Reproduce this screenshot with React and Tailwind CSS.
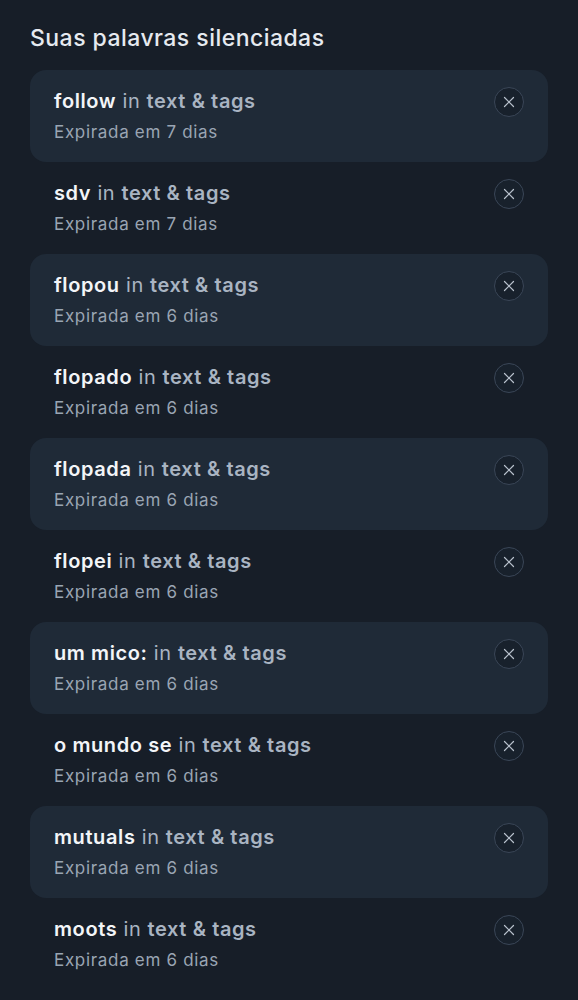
import { X } from 'lucide-react';

const words = [
  { word: 'follow', days: 7 },
  { word: 'sdv', days: 7 },
  { word: 'flopou', days: 6 },
  { word: 'flopado', days: 6 },
  { word: 'flopada', days: 6 },
  { word: 'flopei', days: 6 },
  { word: 'um mico:', days: 6 },
  { word: 'o mundo se', days: 6 },
  { word: 'mutuals', days: 6 },
  { word: 'moots', days: 6 },
];

export default function App() {
  return (
    <div className="min-h-screen bg-[#171e28] px-[30px] pt-[23px] pb-8" style={{ fontFamily: 'Inter, "Noto Sans", sans-serif' }}>
      <h1 className="text-[23px] font-medium tracking-[0.02em] text-[#e6eaf0] leading-[30px] mb-[17px]">Suas palavras silenciadas</h1>
      <div className="flex flex-col">
        {words.map((w, i) => (
          <div
            key={w.word}
            className={`h-[92px] rounded-2xl pl-6 pr-6 flex items-start justify-between ${i % 2 === 0 ? 'bg-[#1f2a37]' : ''}`}
          >
            <div className="pt-[17px]">
              <div className="text-[20px] leading-[28px] tracking-[0.03em] text-[#a9b4c2]">
                <span className="font-semibold text-[#f3f5f8]">{w.word}</span>{' '}
                <span>in</span>{' '}
                <span className="font-semibold">text &amp; tags</span>
              </div>
              <div className="text-[17px] leading-[24px] tracking-[0.04em] text-[#9aa5b3] mt-[5px]">Expirada em {w.days} dias</div>
            </div>
            <button className="mt-[17px] w-[30px] h-[30px] rounded-full border border-[#3a4657] bg-[#18212c] flex items-center justify-center">
              <X className="w-[18px] h-[18px] text-[#b9c2cd]" strokeWidth={1.6} />
            </button>
          </div>
        ))}
      </div>
    </div>
  );
}
